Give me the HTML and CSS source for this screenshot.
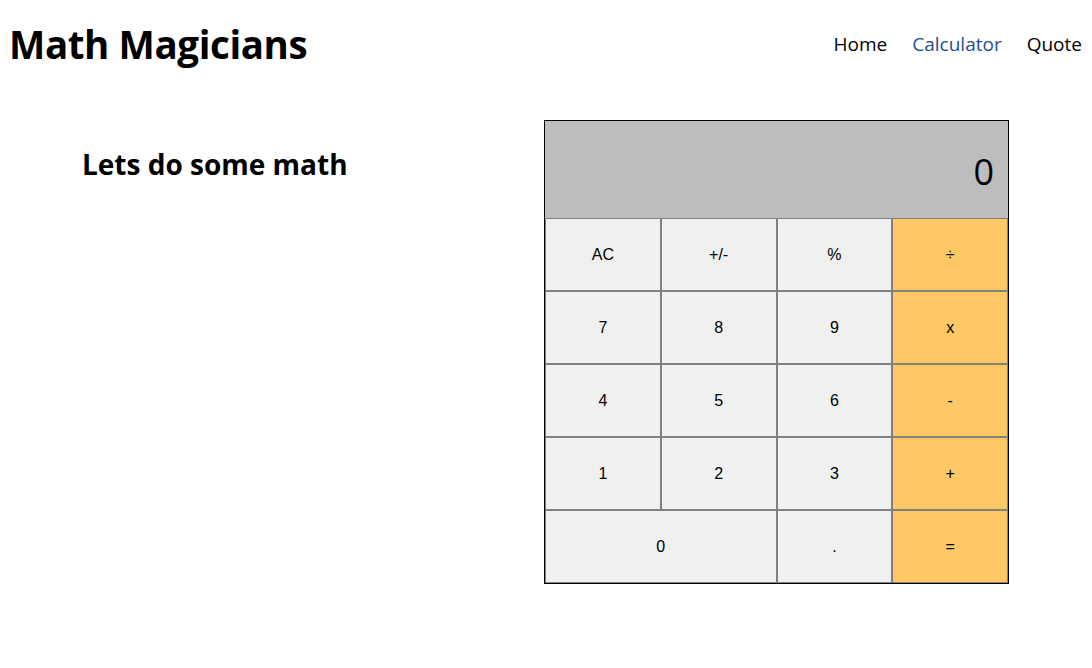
FILE: index.html
```html
<!DOCTYPE html>
<html lang="en">
<head>
<meta charset="utf-8">
<title>Math Magicians</title>
<link rel="stylesheet" href="styles.css">
</head>
<body>
<header class="header">
  <h1 class="logo">Math Magicians</h1>
  <nav class="nav">
    <a class="nav-link" href="#">Home</a>
    <a class="nav-link active" href="#">Calculator</a>
    <a class="nav-link" href="#">Quote</a>
  </nav>
</header>
<main class="main">
  <section class="intro">
    <h2 class="intro-title">Lets do some math</h2>
  </section>
  <div class="calculator">
    <div class="display">0</div>
    <div class="keys">
      <button class="key">AC</button>
      <button class="key">+/-</button>
      <button class="key">%</button>
      <button class="key op">÷</button>
      <button class="key">7</button>
      <button class="key">8</button>
      <button class="key">9</button>
      <button class="key op">x</button>
      <button class="key">4</button>
      <button class="key">5</button>
      <button class="key">6</button>
      <button class="key op">-</button>
      <button class="key">1</button>
      <button class="key">2</button>
      <button class="key">3</button>
      <button class="key op">+</button>
      <button class="key zero">0</button>
      <button class="key">.</button>
      <button class="key op">=</button>
    </div>
  </div>
</main>
</body>
</html>
```
FILE: styles.css
```css
* {
  box-sizing: border-box;
}

body {
  margin: 0;
  font-family: "Open Sans", "Noto Sans", sans-serif;
  color: #000;
  background: #fff;
}

.header {
  display: flex;
  align-items: center;
  justify-content: space-between;
  height: 88px;
  padding: 0 10px 0 9px;
}

.logo {
  margin: 0;
  font-size: 38.5px;
  font-weight: 700;
  letter-spacing: -0.4px;
}

.nav {
  display: flex;
  gap: 25px;
}

.nav-link {
  font-size: 19px;
  color: #000;
  text-decoration: none;
}

.nav-link.active {
  color: #1e4f8f;
}

.main {
  display: flex;
  align-items: flex-start;
  padding-top: 32px;
}

.intro {
  flex: 1;
  padding-left: 82px;
}

.intro-title {
  margin: 25px 0 0;
  font-size: 28px;
  font-weight: 700;
}

.calculator {
  width: 465px;
  margin-right: 83px;
  border: 1px solid #000;
}

.display {
  height: 97px;
  background: #bdbdbd;
  display: flex;
  align-items: center;
  justify-content: flex-end;
  padding: 4px 14px 0 0;
  font-size: 36px;
  font-weight: 400;
}

.keys {
  display: grid;
  grid-template-columns: repeat(4, 1fr);
  grid-auto-rows: 73px;
}

.key {
  font-family: "Liberation Sans", Arial, sans-serif;
  font-size: 16px;
  color: #000;
  background: #f0f0f0;
  border: 1px solid #808080;
  margin: 0;
  padding: 0;
}

.key.op {
  background: #fec864;
}

.key.zero {
  grid-column: span 2;
}
```
